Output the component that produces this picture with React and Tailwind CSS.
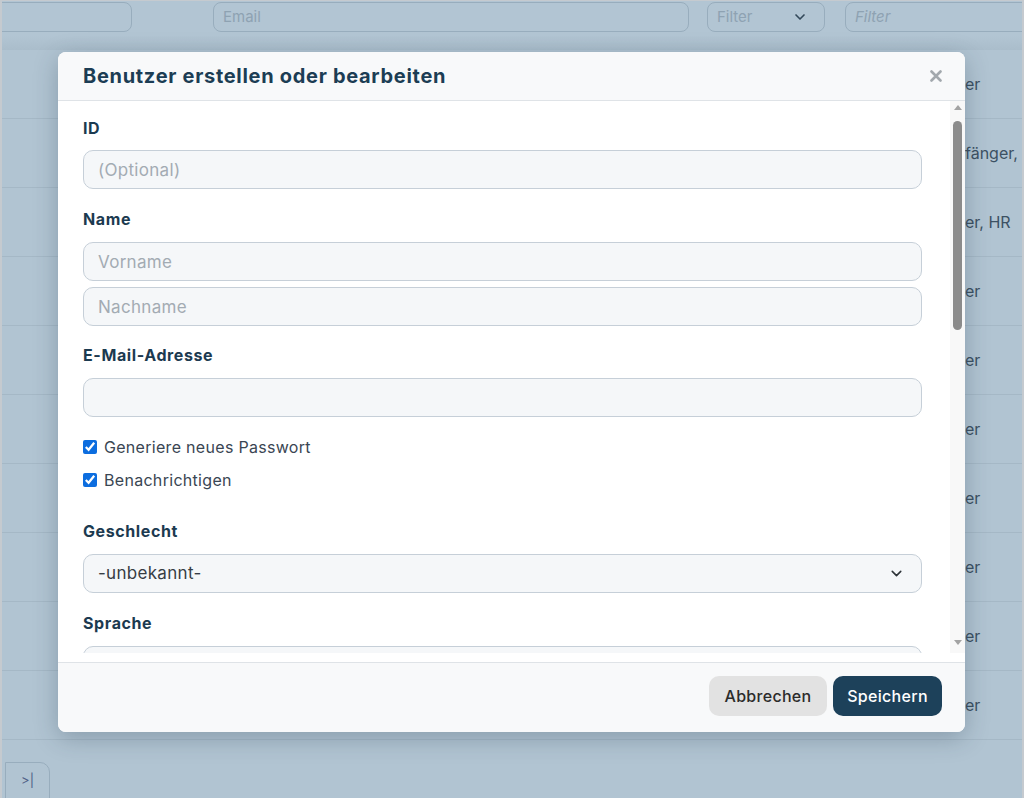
import { ChevronDown } from "lucide-react";

const rows = ["er", "fänger,", "er, HR", "er", "er", "er", "er", "er", "er", "er"];

const Label = ({ children }) => (
    <div className="text-[16px] leading-[22px] font-bold tracking-[0.6px] text-[#1c3a50]">{children}</div>
);

const Field = ({ placeholder, className = "" }) => (
    <input
        placeholder={placeholder}
        className={`block w-full h-[39px] rounded-[10px] border-[1.5px] border-[#c6cfd8] bg-[#f5f7f9] px-[14px] text-[17px] tracking-[0.3px] text-[#333] placeholder:text-[#a3abb3] outline-none ${className}`}
    />
);

const Check = ({ children, className = "" }) => (
    <label className={`flex items-center gap-[7px] h-[22px] text-[16px] tracking-[0.3px] text-[#3a4653] ${className}`}>
        <input type="checkbox" defaultChecked className="w-[14px] h-[14px] m-0 accent-[#0c6ddf]" />
        {children}
    </label>
);

export default function App() {
    return (
        <div className="relative w-[1024px] h-[798px] overflow-hidden border-x-2 border-t border-[#c5cacf] bg-[#b1c4d2] font-[Inter,sans-serif]">
            {/* filter row */}
            <div className="h-[49px] flex items-start pt-[1px] bg-gradient-to-b from-[#b2c5d3] from-70% to-[#aabdcb]">
                <div className="shrink-0 -ml-[10px] w-[140px] h-[30px] rounded-[8px] border border-[#98adbd]" />
                <div className="shrink-0 ml-[81px] w-[476px] h-[30px] rounded-[8px] border border-[#98adbd] flex items-center px-[9px] text-[15px] text-[#8ea2b2]">Email</div>
                <div className="shrink-0 ml-[18px] w-[118px] h-[30px] rounded-[8px] border border-[#98adbd] flex items-center justify-between pl-[9px] pr-[16px] text-[15px] text-[#8ea2b2]">
                    Filter
                    <ChevronDown size={16} strokeWidth={2.5} className="text-[#33495a]" />
                </div>
                <div className="shrink-0 ml-[20px] w-[200px] h-[30px] rounded-[8px] border border-[#98adbd] flex items-center px-[9px] text-[15px] italic text-[#8ea2b2]">Filter</div>
            </div>

            {/* table body */}
            <div>
                {rows.map((r, i) => (
                    <div key={i} className="grid grid-cols-[963px_1fr] h-[69px] items-center border-b border-[#a5b8c6] text-[16px] text-[#3c5163]">
                        <div />
                        <div className="whitespace-nowrap">{r}</div>
                    </div>
                ))}
            </div>

            {/* pagination */}
            <div className="pt-[22px] pl-[3px]">
                <div className="w-[45px] h-[40px] rounded-tr-[10px] border border-[#98adbd] flex items-start justify-center pt-[8px] text-[13px] text-[#4f5f86]">
                    &gt;|
                </div>
            </div>

            {/* dialog */}
            <div className="absolute inset-0 pt-[51px] pl-[56px]">
                <div className="w-[907px] h-[680px] rounded-[8px] bg-white shadow-[0_6px_24px_rgba(30,50,70,0.28)] flex flex-col overflow-hidden">
                    <div className="h-[49px] shrink-0 bg-[#f8f9fa] border-b border-[#dfe3e7] flex items-center justify-between pl-[25px] pr-[23px]">
                        <div className="text-[20px] font-bold text-[#1c3d54] tracking-[0.7px]">Benutzer erstellen oder bearbeiten</div>
                        <svg width="12" height="12" viewBox="0 0 12 12" className="text-[#a2a8ad]">
                            <path d="M1.5 1.5 L10.5 10.5 M10.5 1.5 L1.5 10.5" stroke="currentColor" strokeWidth="2.6" strokeLinecap="round" />
                        </svg>
                    </div>

                    <div className="h-[561px] shrink-0 pb-[9px]">
                        <div className="h-[552px] flex">
                            <div className="flex-1 overflow-hidden pl-[25px] pr-[28px] pt-[16px]">
                                <Label>ID</Label>
                                <Field placeholder="(Optional)" className="mt-[11px]" />

                                <div className="mt-[19px]"><Label>Name</Label></div>
                                <Field placeholder="Vorname" className="mt-[12px]" />
                                <Field placeholder="Nachname" className="mt-[6px]" />

                                <div className="mt-[18px]"><Label>E-Mail-Adresse</Label></div>
                                <Field className="mt-[12px]" />

                                <Check className="mt-[19px]">Generiere neues Passwort</Check>
                                <Check className="mt-[11px]">Benachrichtigen</Check>

                                <div className="mt-[29px]"><Label>Geschlecht</Label></div>
                                <div className="mt-[12px] h-[39px] rounded-[10px] border-[1.5px] border-[#c6cfd8] bg-[#f5f7f9] flex items-center justify-between pl-[14px] pr-[16px] text-[17px] tracking-[0.3px] text-[#373d44]">
                                    -unbekannt-
                                    <ChevronDown size={17} strokeWidth={2.2} className="text-[#2d3338]" />
                                </div>

                                <div className="mt-[19px]"><Label>Sprache</Label></div>
                                <div className="mt-[12px] h-[39px] rounded-[10px] border-[1.5px] border-[#c6cfd8] bg-[#f5f7f9]" />
                            </div>

                            {/* scrollbar */}
                            <div className="w-[15px] bg-[#f8f8f8] flex flex-col items-center pt-[4px] pb-[8px]">
                                <div className="w-0 h-0 border-x-[4px] border-x-transparent border-b-[5px] border-b-[#a3a3a3]" />
                                <div className="mt-[11px] w-[9px] h-[209px] rounded-full bg-[#8b8b8b]" />
                                <div className="flex-1" />
                                <div className="w-0 h-0 border-x-[4px] border-x-transparent border-t-[5px] border-t-[#a3a3a3]" />
                            </div>
                        </div>
                    </div>

                    <div className="flex-1 border-t border-[#dfe3e7] bg-[#f8f9fa] flex items-center justify-end gap-[6px] pr-[23px] pb-[3px]">
                        <button className="h-[40px] w-[118px] rounded-[10px] bg-[#e2e2e2] text-[16px] font-medium tracking-[0.3px] text-[#2b2b2b]">Abbrechen</button>
                        <button className="h-[40px] w-[109px] rounded-[10px] bg-[#1d415a] text-[16px] font-medium tracking-[0.3px] text-white">Speichern</button>
                    </div>
                </div>
            </div>
        </div>
    );
}
